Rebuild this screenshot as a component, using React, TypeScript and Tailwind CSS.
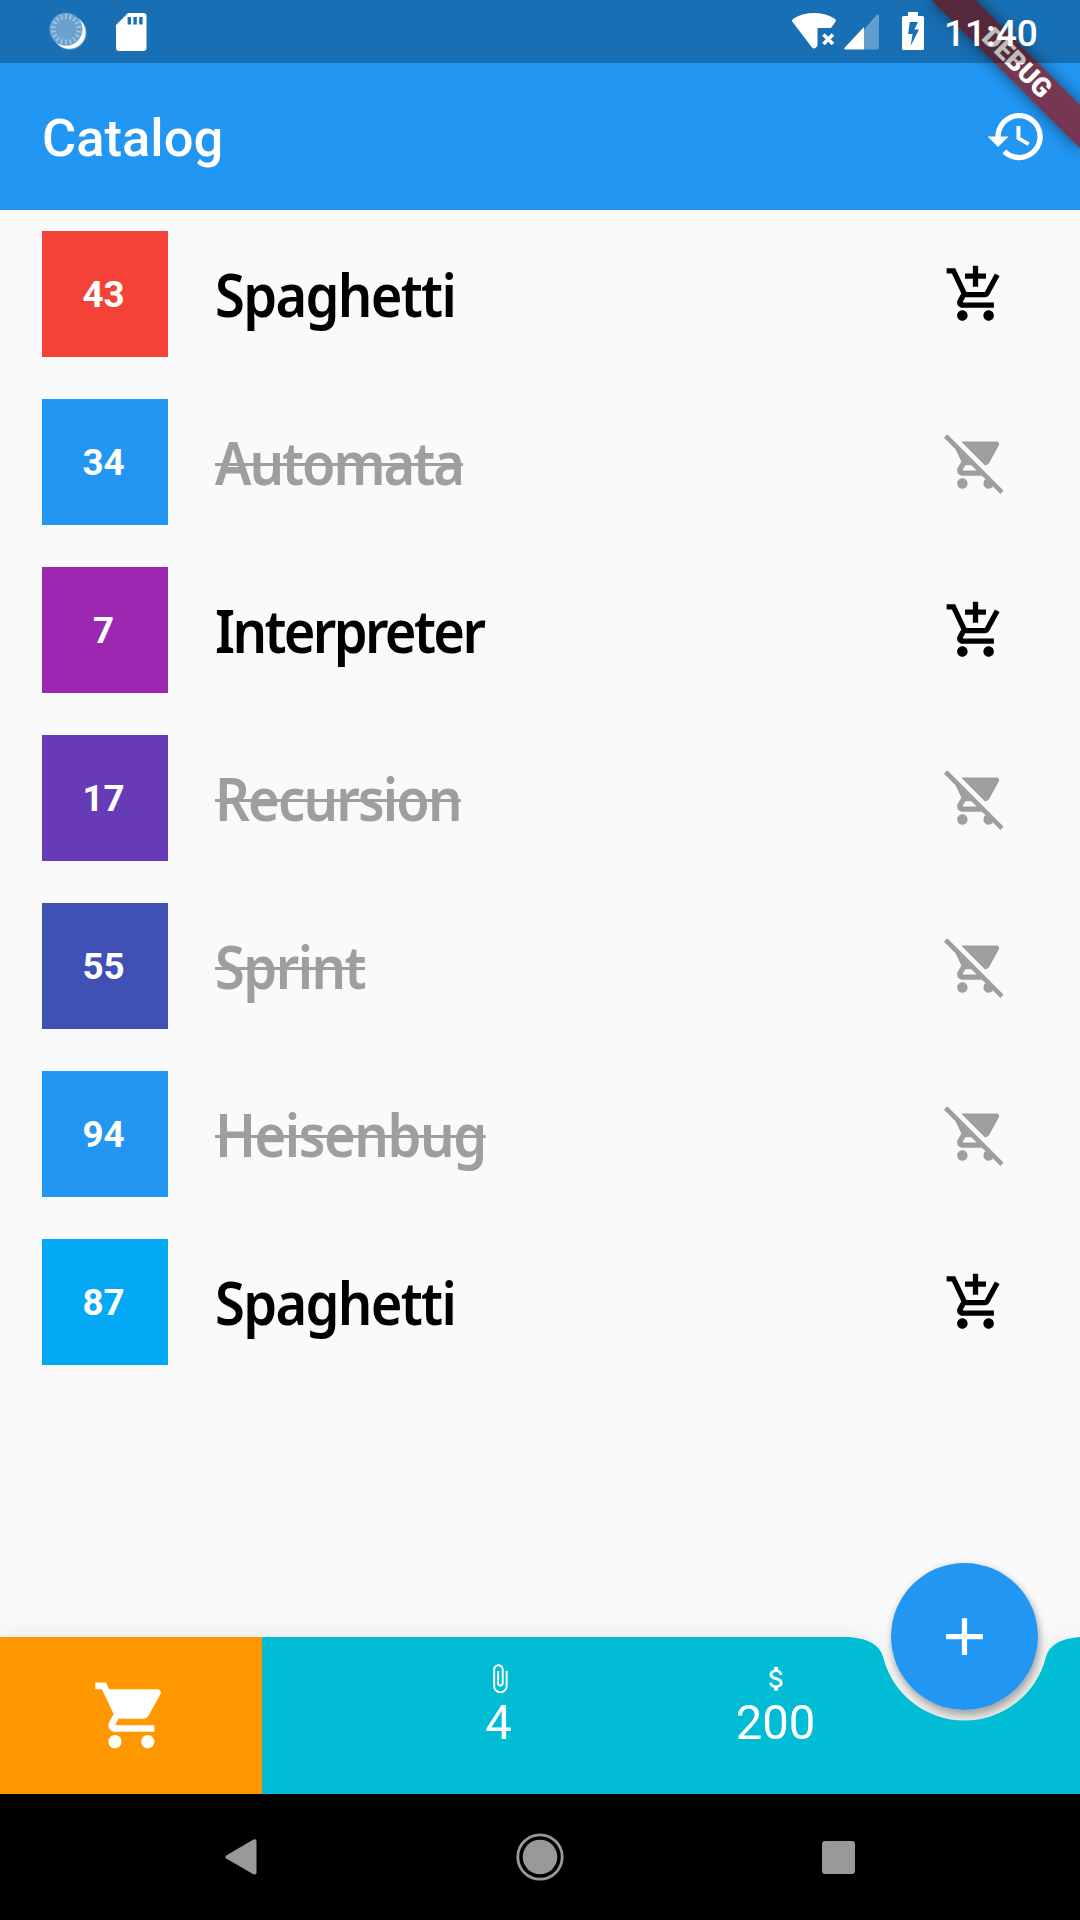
import React from "react";

type Item = {
  number: number;
  name: string;
  swatch: string;
  tracking: string;
  inCart: boolean;
};

const items: Item[] = [
  { number: 43, name: "Spaghetti", swatch: "bg-[#f44336]", tracking: "tracking-[-1.85px]", inCart: false },
  { number: 34, name: "Automata", swatch: "bg-[#2196f3]", tracking: "tracking-[-2.2px]", inCart: true },
  { number: 7, name: "Interpreter", swatch: "bg-[#9c27b0]", tracking: "tracking-[-2.9px]", inCart: false },
  { number: 17, name: "Recursion", swatch: "bg-[#673ab7]", tracking: "tracking-[-2px]", inCart: true },
  { number: 55, name: "Sprint", swatch: "bg-[#3f51b5]", tracking: "tracking-[-1.7px]", inCart: true },
  { number: 94, name: "Heisenbug", swatch: "bg-[#2196f3]", tracking: "tracking-[-1.6px]", inCart: true },
  { number: 87, name: "Spaghetti", swatch: "bg-[#03a9f4]", tracking: "tracking-[-1.85px]", inCart: false },
];

const paths = {
  history:
    "M13 3c-4.97 0-9 4.03-9 9H1l3.89 3.89.07.14L9 12H6c0-3.87 3.13-7 7-7s7 3.13 7 7-3.13 7-7 7c-1.93 0-3.68-.79-4.94-2.06l-1.42 1.42C8.27 19.99 10.51 21 13 21c4.97 0 9-4.03 9-9s-4.03-9-9-9zm-1 5v5l4.28 2.54.72-1.21-3.5-2.08V8H12z",
  addCart:
    "M11 9h2V6h3V4h-3V1h-2v3H8v2h3v3zm-4 9c-1.1 0-1.99.9-1.99 2S5.9 22 7 22s2-.9 2-2-.9-2-2-2zm10 0c-1.1 0-1.99.9-1.99 2s.89 2 1.99 2 2-.9 2-2-.9-2-2-2zm-9.83-3.25l.03-.12.9-1.63h7.45c.75 0 1.41-.41 1.75-1.03l3.86-7.01L19.42 4h-.01l-1.1 2-2.76 5H8.53l-.13-.27L6.16 6l-.95-2-.94-2H1v2h2l3.6 7.59-1.35 2.45c-.16.28-.25.61-.25.96 0 1.1.9 2 2 2h12v-2H7.42c-.13 0-.25-.11-.25-.25z",
  removeCart:
    "M22.73 22.73L2.77 2.77 2 2l-.73-.73L0 2.54l4.39 4.39 2.21 4.66-1.35 2.45c-.16.28-.25.61-.25.96 0 1.1.9 2 2 2h7.46l1.38 1.38c-.5.36-.83.95-.83 1.62 0 1.1.89 2 1.99 2 .67 0 1.26-.33 1.62-.84L21.46 24l1.27-1.27zM7.42 15c-.14 0-.25-.11-.25-.25l.03-.12.9-1.63h2.36l2 2H7.42zm8.13-2c.75 0 1.41-.41 1.75-1.03l3.58-6.49c.08-.14.12-.31.12-.48 0-.55-.45-1-1-1H6.54l9.01 9zM7 18c-1.1 0-1.99.9-1.99 2S5.9 22 7 22s2-.9 2-2-.9-2-2-2z",
  cart: "M7 18c-1.1 0-1.99.9-1.99 2S5.9 22 7 22s2-.9 2-2-.9-2-2-2zM1 2v2h2l3.6 7.59-1.35 2.45c-.16.28-.25.61-.25.96 0 1.1.9 2 2 2h12v-2H7.42c-.14 0-.25-.11-.25-.25l.03-.12.9-1.63h7.45c.75 0 1.41-.41 1.75-1.03l3.58-6.49c.08-.14.12-.31.12-.48 0-.55-.45-1-1-1H5.21l-.94-2H1zm16 16c-1.1 0-1.99.9-1.99 2s.89 2 1.99 2 2-.9 2-2-.9-2-2-2z",
  attach:
    "M16.5 6v11.5c0 2.21-1.79 4-4 4s-4-1.79-4-4V5c0-1.38 1.12-2.5 2.5-2.5s2.5 1.12 2.5 2.5v10.5c0 .55-.45 1-1 1s-1-.45-1-1V6H10v9.5c0 1.38 1.12 2.5 2.5 2.5s2.5-1.12 2.5-2.5V5c0-2.21-1.79-4-4-4S7 2.79 7 5v12.5c0 3.04 2.46 5.5 5.5 5.5s5.5-2.46 5.5-5.5V6h-1.5z",
  money:
    "M11.8 10.9c-2.27-.59-3-1.2-3-2.15 0-1.09 1.01-1.85 2.7-1.85 1.78 0 2.44.85 2.5 2.1h2.21c-.07-1.72-1.12-3.3-3.21-3.81V3h-3v2.16c-1.94.42-3.5 1.68-3.5 3.61 0 2.31 1.91 3.46 4.7 4.13 2.5.6 3 1.48 3 2.41 0 .69-.49 1.79-2.7 1.79-2.06 0-2.87-.92-2.98-2.1h-2.2c.12 2.19 1.76 3.42 3.68 3.83V21h3v-2.15c1.95-.37 3.5-1.5 3.5-3.55 0-2.84-2.43-3.81-4.7-4.4z",
  add: "M19 13h-6v6h-2v-6H5v-2h6V5h2v6h6v2z",
};

function Icon({ d, className }: { d: string; className: string }) {
  return (
    <svg viewBox="0 0 24 24" fill="currentColor" className={className}>
      <path d={d} />
    </svg>
  );
}

function SyncSpinner() {
  return (
    <svg viewBox="0 0 40 40" className="size-10">
      <circle cx="20.6" cy="20.8" r="17" fill="#fff" fillOpacity="0.35" />
      <circle cx="20.2" cy="20.4" r="16.3" fill="#fff" />
      <circle cx="17" cy="17.3" r="16.5" fill="#6aa1cf" />
      {Array.from({ length: 18 }, (_, i) => (
        <path key={i} d="M17 1.8v5" stroke="#a3c6e3" strokeWidth="1.6" transform={`rotate(${i * 20} 17 17.3)`} />
      ))}
    </svg>
  );
}

function StatusBar() {
  return (
    <div className="relative z-20 flex h-[63px] items-start bg-black/26 text-white">
      <div className="ml-[49px] mt-3">
        <SyncSpinner />
      </div>
      <svg viewBox="0 0 31 38" className="ml-[27px] mt-[12.5px] h-[38px] w-[31px]">
        <path
          fillRule="evenodd"
          fill="#fff"
          d="M12 0H27.5A3 3 0 0 1 30.5 3V35A3 3 0 0 1 27.5 38H3A3 3 0 0 1 0 35V12ZM11.6 4V11.5H15V4ZM17.4 4V11.5H20.8V4ZM23.2 4V11.5H26.6V4Z"
        />
      </svg>
      <svg viewBox="0 0 46 36" className="ml-auto mt-[13px] h-9 w-[46px]">
        <path
          fill="#fff"
          d="M0 8.2Q-.4 6.8 1.6 5.4Q11 0 22 0T42.4 5.4Q44.2 6.6 43.8 8.2L39 15H25.5V32.5L24 34.6Q22 36.6 20 34.6Z"
        />
        <path d="M31.5 21.5l9.5 9.5M41 21.5l-9.5 9.5" stroke="#fff" strokeWidth="3.6" strokeLinecap="butt" />
      </svg>
      <svg viewBox="0 0 36 36" className="ml-[6px] mt-[13.5px] size-9">
        <path d="M20 15.5L32.5 1Q35 -.6 35 2.2V33.5Q35 35.5 33 35.5H20Z" fill="#fff" fillOpacity="0.32" />
        <path d="M20 13V35.5H1.5Q-.6 35.5 .8 33.4Z" fill="#fff" />
      </svg>
      <svg viewBox="0 0 22 38" className="ml-[22px] mt-3 h-[38px] w-[22px]">
        <path
          fillRule="evenodd"
          fill="#fff"
          d="M6 0H16V4H20.5Q22 4 22 5.5V36.5Q22 38 20.5 38H1.5Q0 38 0 36.5V5.5Q0 4 1.5 4H6ZM7.8 10L6.2 22H10.6L8.6 34L17 17.6H12.4L16 10Z"
        />
      </svg>
      <span className="ml-[20px] mr-[43px] mt-3 w-[93px] whitespace-nowrap text-[37px] font-medium leading-[43px]">11:40</span>
    </div>
  );
}

function DebugBanner() {
  return (
    <div className="absolute right-0 top-0 z-10 size-0 rotate-45">
      <div className="absolute -left-[105px] top-[73.5px] flex h-[31.5px] w-[210px] items-center justify-center bg-[#8d1c24]/78 text-[26.8px] font-black leading-none text-white shadow-[0_0_16px_rgba(0,0,0,0.5)]">
        <span className="pt-px">DEBUG</span>
      </div>
    </div>
  );
}

function Row({ item }: { item: Item }) {
  return (
    <li className="flex h-[168px] items-center pl-[42px] pr-[73.5px]">
      <div
        className={`${item.swatch} flex size-[126px] items-center justify-center pr-[3px] pt-[2px] text-[36.75px] font-bold leading-none text-white`}
      >
        {item.number}
      </div>
      <div
        className={`${item.tracking} ml-[47px] flex-1 origin-left scale-x-92 font-['Noto_Sans',sans-serif] text-[59px] font-[590] leading-[80px] ${
          item.inCart ? "text-[#9e9e9e] line-through decoration-[3px]" : "text-black"
        }`}
      >
        {item.name}
      </div>
      <Icon
        d={item.inCart ? paths.removeCart : paths.addCart}
        className={`size-[63px] ${item.inCart ? "text-[#9e9e9e]" : "text-black"}`}
      />
    </li>
  );
}

function Stat({ icon, value }: { icon: string; value: number }) {
  return (
    <div className="flex flex-col items-center pt-[26px]">
      <Icon d={icon} className="ml-[2px] size-[31.5px]" />
      <span className="pt-[2px] text-[47.25px] leading-[55px]">{value}</span>
    </div>
  );
}

export default function App() {
  return (
    <div className="flex h-[1920px] w-[1080px] flex-col overflow-hidden bg-[#fafafa] font-[Roboto,sans-serif]">
      <header className="relative h-[210px] overflow-hidden bg-[#2196f3] text-white">
        <StatusBar />
        <div className="flex h-[147px] items-center justify-between pl-[42px] pr-[32px]">
          <h1 className="pt-1 text-[52.5px] font-medium leading-none">Catalog</h1>
          <Icon d={paths.history} className="size-[63px]" />
        </div>
        <DebugBanner />
      </header>

      <ul className="flex-1">
        {items.map((item, i) => (
          <Row key={i} item={item} />
        ))}
      </ul>

      <div className="relative h-[157.5px]">
        <div className="absolute -top-[73.5px] left-[891px] size-[147px] rounded-full shadow-[2px_6px_9px_rgba(0,0,0,0.3),0_0_6px_rgba(0,0,0,0.1)]" />
        <div className="relative h-full drop-shadow-[0_0_14px_rgba(0,0,0,0.08)]">
          <div className="flex h-full bg-[#00bcd4] text-white [clip-path:path('M0_0H838.5Q877.9_0_883.05_20.53A84_84_0_0_0_1045.95_20.53Q1051.1_0_1090.5_0V158H0Z')]">
            <div className="flex w-[262px] items-center justify-center bg-[#ff9800]">
              <Icon d={paths.cart} className="size-[78.75px]" />
            </div>
            <div className="ml-[98px] grid w-[554px] grid-cols-2">
              <Stat icon={paths.attach} value={4} />
              <Stat icon={paths.money} value={200} />
            </div>
          </div>
        </div>
        <button className="absolute -top-[73.5px] left-[891px] flex size-[147px] items-center justify-center rounded-full bg-[#2196f3] text-white">
          <Icon d={paths.add} className="size-[63px]" />
        </button>
      </div>

      <nav className="relative flex h-[126px] items-center bg-black text-[#999]">
        <svg viewBox="0 0 32 36" className="ml-[225px] h-9 w-8">
          <path d="M1.2 16.4L28.4 .6Q31.5 -.4 31.5 2.4V33.4Q31.5 36.3 28.4 35.3L1.2 19.5Q-.4 18 1.2 16.4Z" fill="currentColor" />
        </svg>
        <svg viewBox="0 0 48 48" className="ml-[258.5px] size-12">
          <circle cx="24" cy="24" r="22.2" fill="none" stroke="currentColor" strokeWidth="2.8" />
          <circle cx="24" cy="24" r="17.3" fill="currentColor" />
        </svg>
        <div className="ml-[258px] size-[33px] rounded-[3px] bg-[#999]" />
      </nav>
    </div>
  );
}
